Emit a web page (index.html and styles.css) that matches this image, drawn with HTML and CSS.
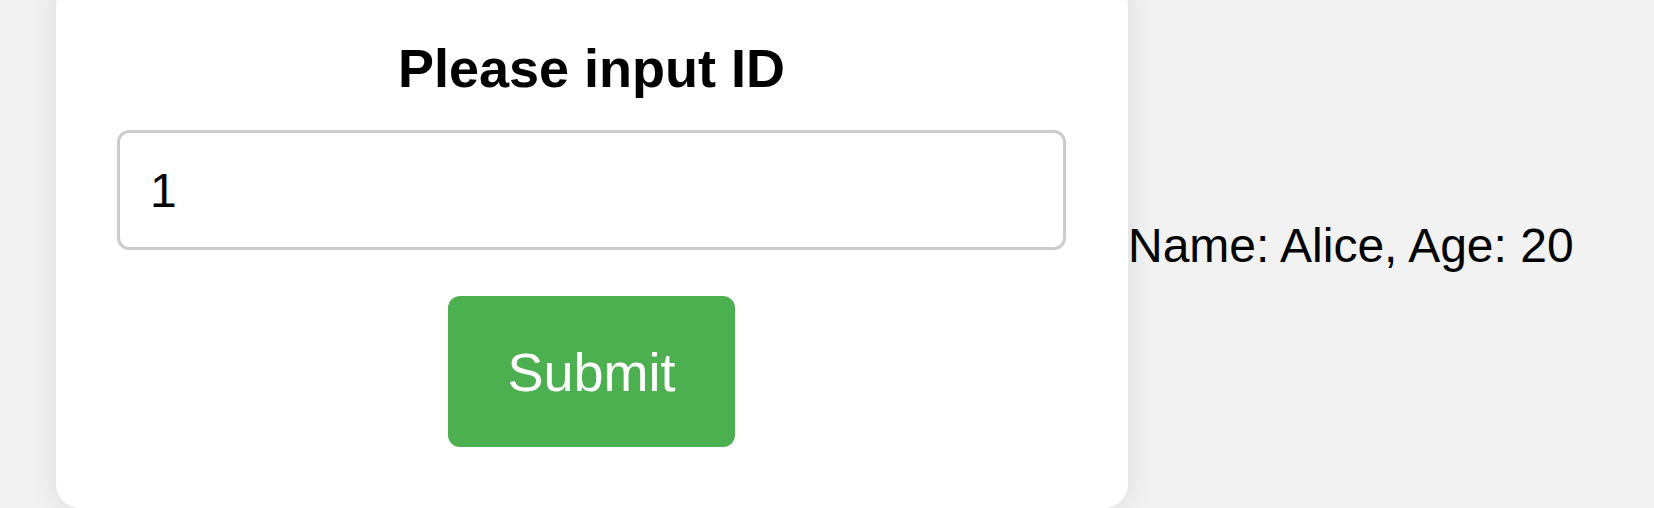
FILE: index.html
```html
<!DOCTYPE html>
<html lang="en">
<head>
<meta charset="utf-8">
<title>Please input ID</title>
<link rel="stylesheet" href="styles.css">
</head>
<body>
<div class="page">
  <div class="card">
    <h2 class="title">Please input ID</h2>
    <input class="id-input" type="text" value="1">
    <button class="submit" type="button">Submit</button>
  </div>
  <div class="result">Name: Alice, Age: 20</div>
</div>
</body>
</html>
```

FILE: styles.css
```css
html {
  overflow: hidden;
  background: #f2f2f2;
}

body {
  margin: 0;
  padding: 0;
  background: #f2f2f2;
  font-family: "Liberation Sans", Arial, sans-serif;
}

.page {
  display: flex;
  align-items: center;
  height: 490px;
  padding: 0 0 18px 56px;
}

.card {
  flex: 0 0 auto;
  box-sizing: border-box;
  width: 1072px;
  height: 526px;
  padding: 55px 62px 60px 61px;
  background: #ffffff;
  border-radius: 24px;
  box-shadow: 0 0 30px rgba(0, 0, 0, 0.1);
  display: flex;
  flex-direction: column;
  align-items: center;
}

.title {
  margin: 0 0 31px;
  font-size: 54px;
  font-weight: bold;
  line-height: 62px;
  color: #000;
  text-align: center;
}

.id-input {
  box-sizing: border-box;
  width: 100%;
  height: 120px;
  margin: 0 0 46px;
  padding: 0 30px;
  border: 3px solid #cccccc;
  border-radius: 12px;
  font-family: "Liberation Sans", Arial, sans-serif;
  font-size: 48px;
  color: #000;
  background: #fff;
  outline: none;
}

.submit {
  box-sizing: border-box;
  width: 287px;
  height: 151px;
  padding: 0;
  border: none;
  border-radius: 12px;
  background: #4caf50;
  color: #ffffff;
  font-family: "Liberation Sans", Arial, sans-serif;
  font-size: 54px;
  cursor: pointer;
}

.result {
  font-size: 48px;
  line-height: 55px;
  color: #000;
  white-space: nowrap;
}
```
